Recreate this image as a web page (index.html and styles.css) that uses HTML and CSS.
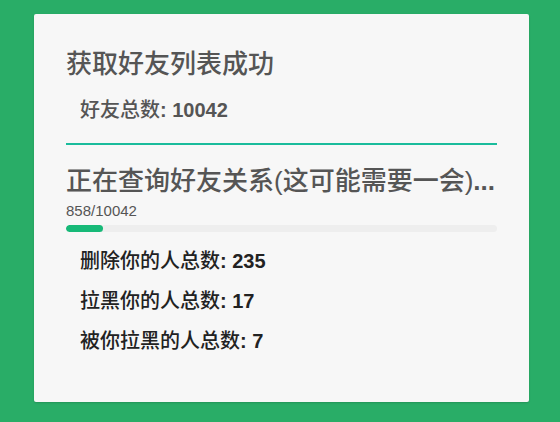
FILE: index.html
```html
<!DOCTYPE html>
<html>
<head>
    <meta charset="utf-8" />
    <title>好友检测</title>
    <link rel="stylesheet" href="styles.css">
</head>
<body>
    <div class="panel">
        <h2 class="title">获取好友列表成功</h2>
        <p class="total"><span class="cjk">好友总数</span>: 10042</p>

        <hr class="divider" />

        <h2 class="title">正在查询好友关系(这可能需要一会)<b>...</b></h2>
        <div class="count">858/10042</div>
        <div class="bar"><div class="fill" style="width:8.5%"></div></div>

        <ul class="stats">
            <li><span class="cjk">删除你的人总数</span>: 235</li>
            <li><span class="cjk">拉黑你的人总数</span>: 17</li>
            <li><span class="cjk">被你拉黑的人总数</span>: 7</li>
        </ul>
    </div>
</body>
</html>
```

FILE: styles.css
```css
body {
    margin: 0;
    padding: 14px 31px 20px 34px;
    background-color: #29ad67;
    font-family: "Liberation Sans", "Noto Sans CJK SC", sans-serif;
}

.panel {
    background-color: #f7f7f7;
    border-radius: 2px;
    box-shadow: 0 1px 2px rgba(0, 0, 0, 0.15);
    padding: 35px 32px 0 32px;
    height: 353px;
}

.title {
    margin: 0;
    font-size: 26px;
    font-weight: 500;
    line-height: 30px;
    color: #555555;
}

.cjk {
    font-weight: 500;
}

.total {
    margin: 19px 0 0 14px;
    font-size: 20px;
    font-weight: bold;
    line-height: 24px;
    color: #555555;
}

.divider {
    margin: 21px 0 0 0;
    border: none;
    height: 2px;
    background-color: #1abc9c;
}

.panel .divider + .title {
    margin-top: 21px;
}

.count {
    margin-top: 6px;
    font-size: 15px;
    line-height: 18px;
    color: #555555;
}

.bar {
    margin-top: 5px;
    height: 7px;
    border-radius: 4px;
    background-color: #eeeeee;
    overflow: hidden;
}

.fill {
    height: 100%;
    border-radius: 4px;
    background-color: #17b978;
}

.stats {
    list-style: none;
    margin: 17px 0 0 14px;
    padding: 0;
}

.stats li {
    font-size: 20px;
    font-weight: bold;
    line-height: 24px;
    margin-bottom: 16px;
    color: #222222;
}
```
